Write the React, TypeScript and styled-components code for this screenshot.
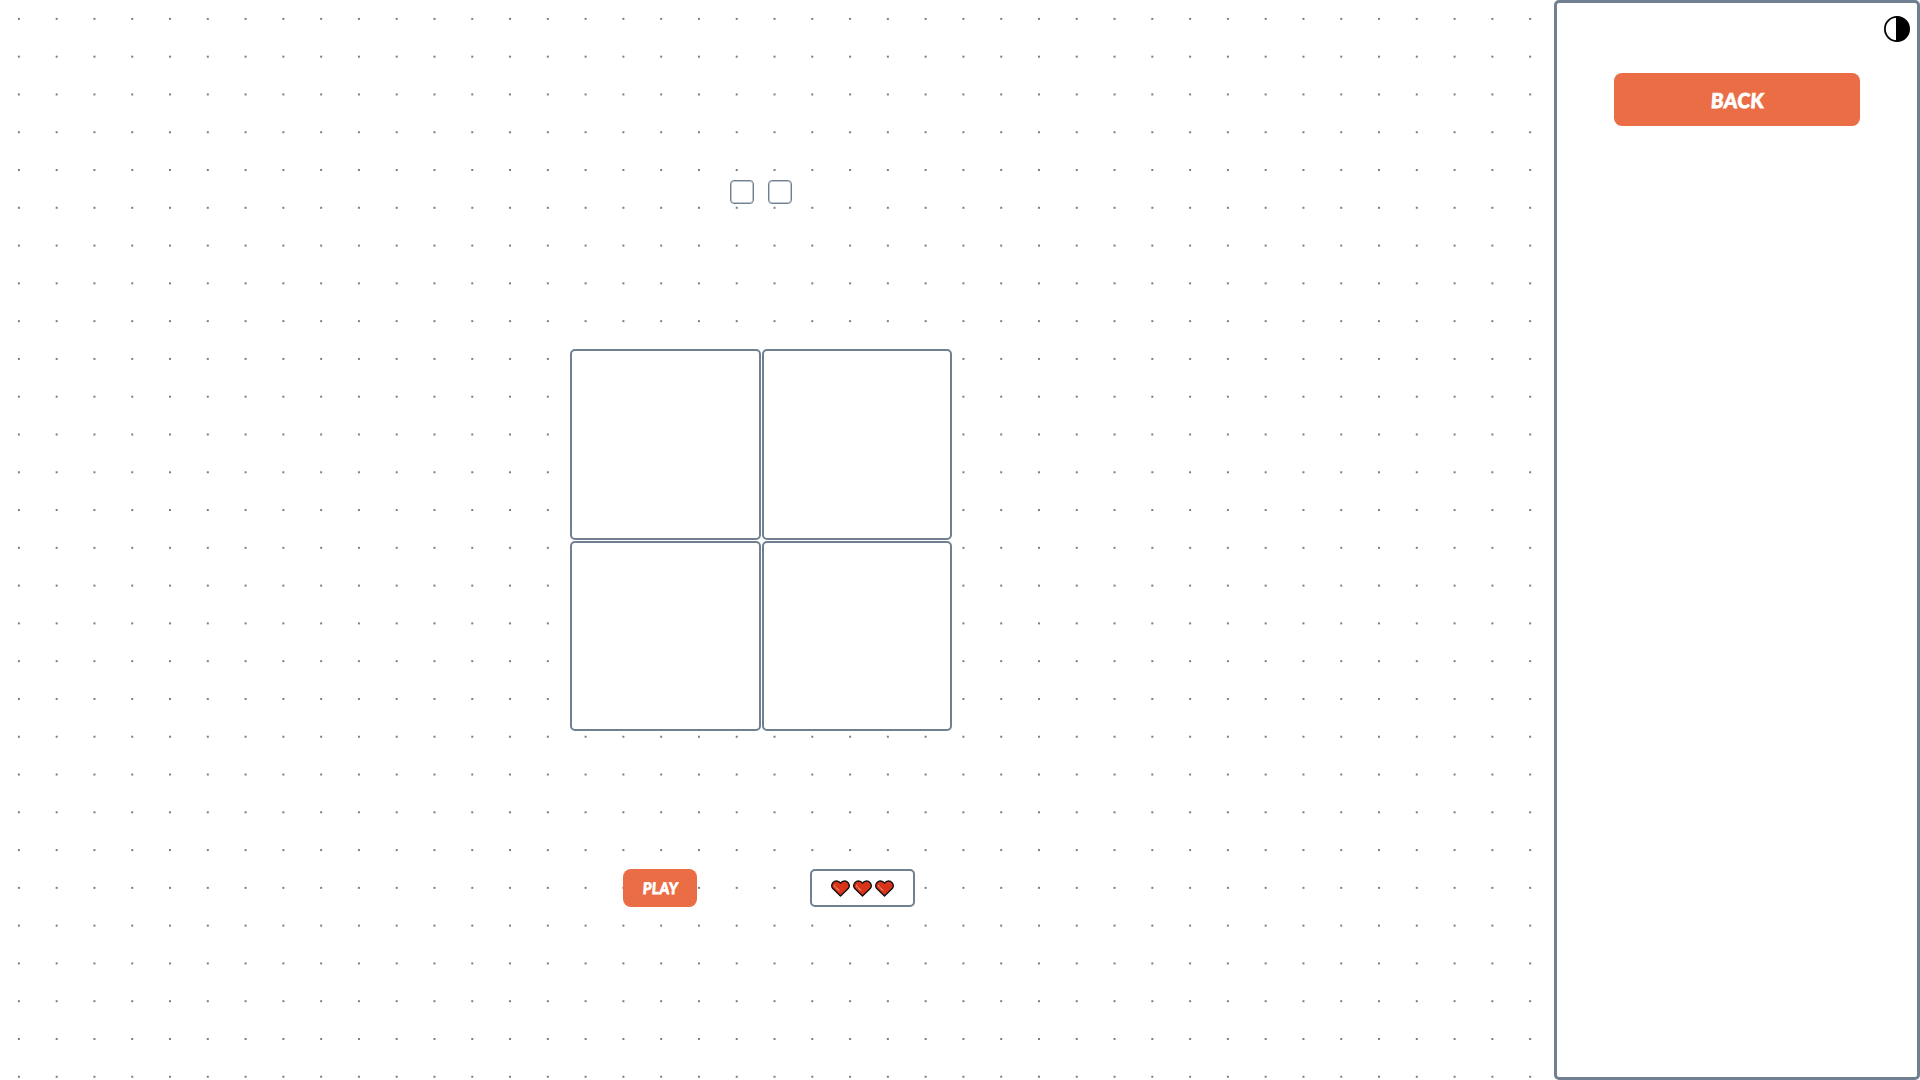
import React from "react";
import styled, { createGlobalStyle } from "styled-components";

const slate = "#708090";
const orange = "#ea6d46";

const GlobalStyle = createGlobalStyle`
  * { box-sizing: border-box; }
  body { margin: 0; background: #fff; overflow: hidden; }
  button { font-family: Lato, "Open Sans", sans-serif; cursor: pointer; }
`;

const Page = styled.div`
  display: flex;
  width: 1920px;
  height: 1080px;
  background-image: radial-gradient(circle, ${slate} 1px, transparent 1px);
  background-size: 37.795px 37.795px;
`;

const Game = styled.main`
  width: 1522px;
  margin-right: 32px;
  display: flex;
  flex-direction: column;
  align-items: center;
`;

const Progress = styled.div`
  display: flex;
  gap: 14px;
  margin-top: 180px;
`;

const Step = styled.span`
  width: 24px;
  height: 24px;
  border: 1px solid ${slate};
  border-radius: 4px;
  background: #fff;
  box-shadow: inset 0 0 0 1px rgba(112, 128, 144, 0.45);
`;

const Board = styled.section`
  display: grid;
  grid-template-columns: 191px 190px;
  grid-template-rows: 191px 190px;
  gap: 1px;
  margin-top: 145px;
`;

const Tile = styled.div`
  border: 2px solid ${slate};
  border-radius: 5px;
  background: #fff;
`;

const Controls = styled.div`
  display: flex;
  gap: 113px;
  margin-top: 138px;
  padding-left: 16px;
  width: 308px;
`;

const Action = styled.button<{ $large?: boolean }>`
  flex: none;
  width: ${(p) => (p.$large ? 246 : 74)}px;
  height: ${(p) => (p.$large ? 53 : 38)}px;
  padding: ${(p) => (p.$large ? "2px 0 0" : "0")};
  border: 0;
  border-radius: 8px;
  background: ${orange};
  color: #fff;
  font-size: ${(p) => (p.$large ? 20.5 : 16)}px;
  font-weight: 900;
  line-height: 1;
`;

const Lives = styled.div`
  display: flex;
  flex: none;
  align-items: center;
  justify-content: center;
  gap: 3px;
  width: 105px;
  height: 38px;
  border: 2px solid ${slate};
  border-radius: 5px;
  background: #fff;
`;

const Sidebar = styled.aside`
  display: flex;
  flex-direction: column;
  align-items: center;
  width: 366px;
  height: 1080px;
  border: 3px solid ${slate};
  border-radius: 5px;
  background: #fff;
`;

const ThemeToggle = styled.div`
  align-self: flex-end;
  height: 26px;
  margin: 13px 7px 31px 0;
  svg { display: block; }
`;

const Label = styled.span<{ $stretch: number }>`
  display: inline-block;
  white-space: nowrap;
  letter-spacing: 0.6px;
  margin-right: -0.6px;
  transform: skewX(-4deg) scaleX(${(p) => p.$stretch});
  -webkit-text-stroke: 0.8px #fff;
`;

function Heart() {
  return (
    <svg width="19" height="17" viewBox="0 0 19 17">
      <path d="M9.5 16 L1.8 8.6 C.4 6.8 .6 4.4 1.9 2.7 Q3.3 1 5.5 1 Q8 1 9.5 3.2 Q11 1 13.5 1 Q15.7 1 17.1 2.7 C18.4 4.4 18.6 6.8 17.2 8.6 Z" fill="#d9341a" stroke="#16100e" strokeWidth="1.4" strokeLinejoin="round" />
      <path d="M3.5 5.2 L4.2 7 M5.3 8 L8 10.4" fill="none" stroke="#ea8068" strokeWidth="1.2" strokeLinecap="round" />
    </svg>
  );
}

export default function App() {
  return (
    <>
      <GlobalStyle />
      <Page>
        <Game>
          <Progress>
            <Step />
            <Step />
          </Progress>
          <Board>
            {[0, 1, 2, 3].map((i) => <Tile key={i} />)}
          </Board>
          <Controls>
            <Action><Label $stretch={0.86}>PLAY</Label></Action>
            <Lives>
              <Heart />
              <Heart />
              <Heart />
            </Lives>
          </Controls>
        </Game>
        <Sidebar>
          <ThemeToggle>
            <svg width="26" height="26" viewBox="0 0 26 26">
              <circle cx="13" cy="13" r="12.1" fill="#fff" stroke="#000" strokeWidth="1.8" />
              <path d="M12 0.6 H13 A12.4 12.4 0 0 1 13 25.4 H12 Z" fill="#000" />
            </svg>
          </ThemeToggle>
          <Action $large><Label $stretch={0.93}>BACK</Label></Action>
        </Sidebar>
      </Page>
    </>
  );
}
